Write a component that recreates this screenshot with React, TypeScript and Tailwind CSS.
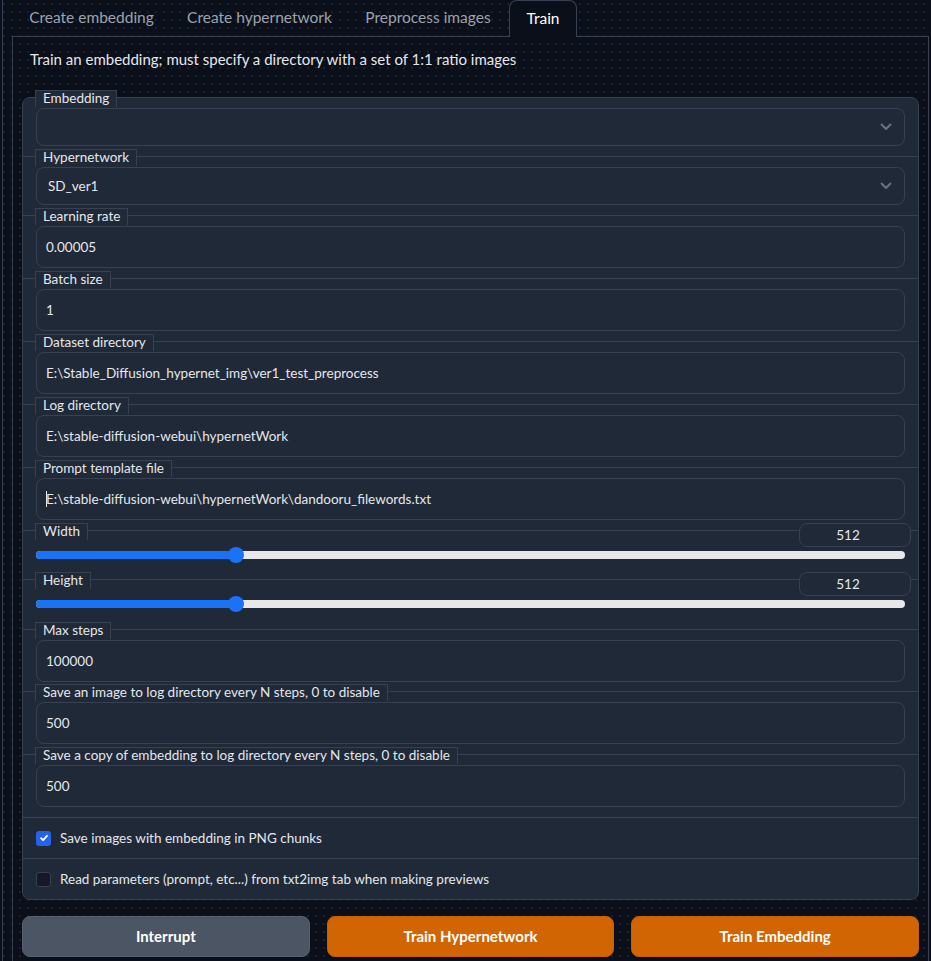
import React from "react";

function Label({ children }: { children: React.ReactNode }) {
  return (
    <span className="absolute left-[12px] top-[-8px] z-10 h-[17px] border border-b-0 border-[#374151] bg-[#1f2937] px-[7px] text-[13.5px] leading-[15px] text-[#e5e7eb] whitespace-nowrap">
      {children}
    </span>
  );
}

function Chevron() {
  return (
    <svg width="12" height="8" viewBox="0 0 12 8" fill="none" className="shrink-0">
      <path d="M1.5 1.5L6 6L10.5 1.5" stroke="#6b7280" strokeWidth="2" strokeLinecap="round" strokeLinejoin="round" />
    </svg>
  );
}

function DropRow({ label, value, first }: { label: string; value: string; first?: boolean }) {
  return (
    <div className={`relative px-[13px] pt-[10px] pb-[10px] ${first ? "" : "border-t border-[#374151]"}`}>
      <Label>{label}</Label>
      <div className="flex h-[38px] items-center justify-between rounded-lg border border-[#374151] bg-[#1f2937] pl-[11px] pr-[12px] text-[13.5px] text-[#e5e7eb]">
        <span>{value}</span>
        <Chevron />
      </div>
    </div>
  );
}

function TextRow({ label, value, caret, tight }: { label: string; value: string; caret?: boolean; tight?: boolean }) {
  return (
    <div className={`relative border-t border-[#374151] px-[13px] pt-[10px] ${tight ? "pb-[9px]" : "pb-[10px]"}`}>
      <Label>{label}</Label>
      <div className="flex h-[42px] items-center rounded-lg border border-[#374151] bg-[#1f2937] pl-[9px] text-[13.5px] text-[#e5e7eb]">
        {caret && <span className="mr-[-1px] h-[16px] w-px bg-[#e5e7eb]" />}
        <span>{value}</span>
      </div>
    </div>
  );
}

function SliderRow({ label, value, tall }: { label: string; value: string; tall?: boolean }) {
  return (
    <div className={`relative border-t border-[#374151] px-[13px] pt-[20px] ${tall ? "pb-[21px]" : "pb-[20px]"}`}>
      <Label>{label}</Label>
      <div className="absolute right-[7px] top-[-8px] z-10 flex h-[24px] w-[112px] items-center justify-center rounded-lg border border-[#374151] bg-[#1f2937] pr-[14px] text-[13.5px] text-[#e5e7eb]">
        {value}
      </div>
      <div className="relative h-[8px] rounded-full bg-[#e8e8e8]">
        <div className="h-full w-[23%] rounded-full bg-[#1a73f5]" />
        <div className="absolute left-[23%] top-[-4px] h-[16px] w-[16px] -translate-x-1/2 rounded-full bg-[#1a73f5]" />
      </div>
    </div>
  );
}

function CheckRow({ label, checked }: { label: string; checked?: boolean }) {
  return (
    <div className="flex h-[41px] items-center gap-[9px] border-t border-[#374151] px-[13px] text-[13.5px] text-[#e5e7eb]">
      {checked ? (
        <span className="flex h-[15px] w-[15px] items-center justify-center rounded-[3px] bg-[#2563eb]">
          <svg width="10" height="10" viewBox="0 0 10 10" fill="none">
            <path d="M2 5.2L4.1 7.2L8 2.8" stroke="white" strokeWidth="1.8" strokeLinecap="round" strokeLinejoin="round" />
          </svg>
        </span>
      ) : (
        <span className="h-[15px] w-[15px] rounded-[3px] border border-[#374151] bg-[#181627]" />
      )}
      <span>{label}</span>
    </div>
  );
}

export default function App() {
  return (
    <div className="min-h-screen w-full overflow-hidden bg-[#0b0f19] bg-[radial-gradient(#182030_1px,transparent_1px)] bg-[length:8px_8px] font-['Lato',sans-serif] text-[#e5e7eb]">
      <div className="flex min-h-screen">
        <div className="ml-[2px] w-px bg-[#374151]" />
        <div className="ml-[9px] flex w-[917px] flex-col">
          <div className="flex h-[36px] text-[15.5px]">
            <div className="flex w-[159px] items-center justify-center text-[#9ca3af]">Create embedding</div>
            <div className="flex w-[177px] items-center justify-center text-[#9ca3af]">Create hypernetwork</div>
            <div className="flex w-[160px] items-center justify-center text-[#9ca3af]">Preprocess images</div>
            <div className="relative z-10 -mb-px ml-[1px] flex h-[37px] w-[68px] items-center justify-center rounded-t-lg border border-b-0 border-[#374151] bg-[#0b0f19] text-white">
              Train
            </div>
          </div>
          <div className="flex-1 border border-b-0 border-[#374151] px-[9px]">
            <div className="pl-[8px] pt-[12px] text-[15px] leading-[20px] text-[#e5e7eb]">
              Train an embedding; must specify a directory with a set of 1:1 ratio images
            </div>
            <div className="mt-[28px] rounded-lg border border-[#374151] bg-[#1f2937]">
              <DropRow first label="Embedding" value="" />
              <DropRow label="Hypernetwork" value="SD_ver1" />
              <TextRow label="Learning rate" value="0.00005" />
              <TextRow label="Batch size" value="1" />
              <TextRow label="Dataset directory" value="E:\Stable_Diffusion_hypernet_img\ver1_test_preprocess" />
              <TextRow label="Log directory" value="E:\stable-diffusion-webui\hypernetWork" />
              <TextRow label="Prompt template file" value="E:\stable-diffusion-webui\hypernetWork\dandooru_filewords.txt" caret />
              <SliderRow label="Width" value="512" />
              <SliderRow label="Height" value="512" tall />
              <TextRow label="Max steps" value="100000" tight />
              <TextRow label="Save an image to log directory every N steps, 0 to disable" value="500" />
              <TextRow label="Save a copy of embedding to log directory every N steps, 0 to disable" value="500" />
              <CheckRow checked label="Save images with embedding in PNG chunks" />
              <CheckRow label="Read parameters (prompt, etc...) from txt2img tab when making previews" />
            </div>
            <div className="mt-[16px] grid grid-cols-3 gap-[17px]">
              <button className="h-[41px] rounded-lg border border-[#566070] bg-[#4b5563] text-[15px] font-bold text-white">
                Interrupt
              </button>
              <button className="h-[41px] rounded-lg border border-[#c95f02] bg-[#d16403] text-[15px] font-bold text-white">
                Train Hypernetwork
              </button>
              <button className="h-[41px] rounded-lg border border-[#c95f02] bg-[#d16403] text-[15px] font-bold text-white">
                Train Embedding
              </button>
            </div>
          </div>
        </div>
      </div>
    </div>
  );
}
